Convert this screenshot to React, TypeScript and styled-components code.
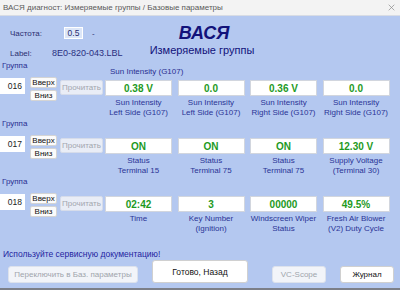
import React from 'react';
import styled, { createGlobalStyle } from 'styled-components';

const GlobalStyle = createGlobalStyle`
  html, body {
    margin: 0;
    padding: 0;
    background: #b4c8f0;
  }
  * {
    box-sizing: border-box;
  }
`;

type Cell = { value: string; label: string[] };
type Group = { id: string; caption?: string; cells: Cell[] };

const groups: Group[] = [
  {
    id: '016',
    caption: 'Sun Intensity (G107)',
    cells: [
      { value: '0.38 V', label: ['Sun Intensity', 'Left Side (G107)'] },
      { value: '0.0', label: ['Sun Intensity', 'Left Side (G107)'] },
      { value: '0.36 V', label: ['Sun Intensity', 'Right Side (G107)'] },
      { value: '0.0', label: ['Sun Intensity', 'Right Side (G107)'] },
    ],
  },
  {
    id: '017',
    cells: [
      { value: 'ON', label: ['Status', 'Terminal 15'] },
      { value: 'ON', label: ['Status', 'Terminal 75'] },
      { value: 'ON', label: ['Status', 'Terminal 75'] },
      { value: '12.30 V', label: ['Supply Voltage', '(Terminal 30)'] },
    ],
  },
  {
    id: '018',
    cells: [
      { value: '02:42', label: ['Time'] },
      { value: '3', label: ['Key Number', '(Ignition)'] },
      { value: '00000', label: ['Windscreen Wiper', 'Status'] },
      { value: '49.5%', label: ['Fresh Air Blower', '(V2) Duty Cycle'] },
    ],
  },
];

const App: React.FC = () => {
  return (
    <>
      <GlobalStyle />
      <Window>
        <TitleBar>
          <TitleText>ВАСЯ диагност: Измеряемые группы / Базовые параметры</TitleText>
          <CloseIcon width="10" height="10" viewBox="0 0 10 10">
            <path d="M1 1 L9 9 M9 1 L1 9" stroke="#8a8a8a" strokeWidth="1" />
          </CloseIcon>
        </TitleBar>

        <Header>
          <Params>
            <ParamRow>
              <ParamName>Частота:</ParamName>
              <FreqBox>0.5</FreqBox>
              <Dash>-</Dash>
            </ParamRow>
            <ParamRow>
              <ParamName $narrow>Label:</ParamName>
              <ParamValue>8E0-820-043.LBL</ParamValue>
            </ParamRow>
          </Params>
          <TitleBlock>
            <BigTitle>ВАСЯ</BigTitle>
            <SubTitle>Измеряемые группы</SubTitle>
          </TitleBlock>
        </Header>

        {groups.map((g) => (
          <GroupBlock key={g.id}>
            <GroupHead>
              <GroupLabel>Группа</GroupLabel>
              {g.caption && <Caption>{g.caption}</Caption>}
            </GroupHead>
            <GroupBody>
              <Controls>
                <GroupInput>{g.id}</GroupInput>
                <UpDown>
                  <SmallButton>Вверх</SmallButton>
                  <SmallButton>Вниз</SmallButton>
                </UpDown>
                <ReadButton>Прочитать</ReadButton>
              </Controls>
              <Cells>
                {g.cells.map((c, i) => (
                  <CellColumn key={i}>
                    <ValueBox>{c.value}</ValueBox>
                    <CellLabel>
                      {c.label.map((l, j) => (
                        <div key={j}>{l}</div>
                      ))}
                    </CellLabel>
                  </CellColumn>
                ))}
              </Cells>
            </GroupBody>
          </GroupBlock>
        ))}

        <Notice>Используйте сервисную документацию!</Notice>

        <Footer>
          <FooterButton $w={130} $disabled>Переключить в Баз. параметры</FooterButton>
          <FooterButton $w={96} $h={23} $big>Готово, Назад</FooterButton>
          <Spacer />
          <FooterButton $w={54} $disabled>VC-Scope</FooterButton>
          <FooterButton $w={54}>Журнал</FooterButton>
        </Footer>
      </Window>
    </>
  );
};

const Window = styled.div`
  width: 400px;
  height: 290px;
  background: #b4c8f0;
  border-bottom: 2px solid #7c7f88;
  font-family: "Liberation Sans", Arial, sans-serif;
  display: flex;
  flex-direction: column;
  overflow: hidden;
`;

const TitleBar = styled.div`
  height: 16px;
  background: #f3f3f3;
  border-bottom: 1px solid #d8dce4;
  display: flex;
  align-items: center;
  justify-content: space-between;
  padding: 0 5px 0 3px;
`;

const TitleText = styled.span`
  font-size: 8px;
  color: #5a5a5a;
  white-space: nowrap;
`;

const CloseIcon = styled.svg`
  display: block;
  width: 7px;
  height: 7px;
`;

const Header = styled.div`
  height: 44px;
  display: flex;
`;

const Params = styled.div`
  width: 140px;
  padding: 11px 0 0 10px;
  display: flex;
  flex-direction: column;
  gap: 8px;
`;

const ParamRow = styled.div`
  height: 12px;
  display: flex;
  align-items: center;
`;

const ParamName = styled.span<{ $narrow?: boolean }>`
  width: ${(p) => (p.$narrow ? 42 : 54)}px;
  font-size: 8px;
  color: #2a2f70;
`;

const FreqBox = styled.span`
  width: 19px;
  height: 12px;
  background: #dce6f8;
  border: 1px solid #ffffff;
  font-size: 8.5px;
  color: #2a2f70;
  display: flex;
  align-items: center;
  justify-content: center;
`;

const Dash = styled.span`
  margin-left: 9px;
  font-size: 8px;
  color: #2a2f70;
`;

const ParamValue = styled.span`
  font-size: 9px;
  color: #2a2f80;
`;

const TitleBlock = styled.div`
  width: 124px;
  display: flex;
  flex-direction: column;
  align-items: center;
  padding-top: 6px;
`;

const BigTitle = styled.div`
  font-size: 18px;
  font-weight: bold;
  font-style: italic;
  color: #12127a;
  line-height: 22px;
  padding-left: 4px;
`;

const SubTitle = styled.div`
  font-size: 11px;
  color: #12127a;
  line-height: 12px;
`;

const GroupBlock = styled.div`
  height: 58px;
  display: flex;
  flex-direction: column;
`;

const GroupHead = styled.div`
  height: 17px;
  display: flex;
  align-items: flex-start;
`;

const GroupLabel = styled.span`
  width: 105px;
  padding-left: 2px;
  font-size: 8px;
  line-height: 12px;
  color: #2a2f90;
`;

const Caption = styled.span`
  margin-top: 6px;
  padding-left: 5px;
  font-size: 8px;
  line-height: 11px;
  color: #2a2f90;
`;

const GroupBody = styled.div`
  display: flex;
`;

const Controls = styled.div`
  width: 105px;
  height: 26px;
  display: flex;
  align-items: flex-start;
`;

const GroupInput = styled.div`
  margin-top: 1px;
  width: 25px;
  height: 16px;
  background: #ffffff;
  font-size: 8.5px;
  color: #222;
  display: flex;
  align-items: center;
  justify-content: flex-end;
  padding-right: 3px;
`;

const UpDown = styled.div`
  margin-left: 5px;
  width: 27px;
  display: flex;
  flex-direction: column;
  gap: 2px;
`;

const SmallButton = styled.div`
  height: 11px;
  background: #fbfbfb;
  border: 1px solid #d4d4d4;
  border-radius: 2px;
  font-size: 8px;
  color: #111;
  display: flex;
  align-items: center;
  justify-content: center;
`;

const ReadButton = styled.div`
  margin-left: 3px;
  margin-top: 3px;
  width: 43px;
  height: 15px;
  background: #e9edf6;
  border: 1px solid #d6dcea;
  border-radius: 2px;
  font-size: 8px;
  color: #a2a6ae;
  display: flex;
  align-items: center;
  justify-content: center;
`;

const Cells = styled.div`
  display: grid;
  grid-template-columns: repeat(4, 67px);
  column-gap: 5.5px;
`;

const CellColumn = styled.div`
  display: flex;
  flex-direction: column;
  align-items: center;
`;

const ValueBox = styled.div`
  margin-top: 3px;
  width: 67px;
  height: 16px;
  background: #ffffff;
  border: 1px solid #d2d6de;
  font-size: 10px;
  font-weight: bold;
  color: #1e9a1e;
  display: flex;
  align-items: center;
  justify-content: center;
`;

const CellLabel = styled.div`
  margin-top: 2px;
  font-size: 8px;
  line-height: 10px;
  color: #2a3496;
  text-align: center;
  white-space: nowrap;
`;

const Notice = styled.div`
  margin-top: 14px;
  padding-left: 3px;
  font-size: 8.5px;
  line-height: 12px;
  color: #2424a0;
`;

const Footer = styled.div`
  height: 23px;
  display: flex;
  align-items: flex-end;
  gap: 14px;
  padding: 0 6px 0 8px;
`;

const Spacer = styled.div`
  flex: 1;
  margin-right: -8px;
`;

const FooterButton = styled.div<{ $w: number; $h?: number; $disabled?: boolean; $big?: boolean }>`
  width: ${(p) => p.$w}px;
  height: ${(p) => p.$h ?? 17}px;
  background: ${(p) => (p.$disabled ? '#f2f4f9' : '#ffffff')};
  border: 1px solid ${(p) => (p.$disabled ? '#dde2ec' : '#d0d0d0')};
  border-radius: 3px;
  font-size: ${(p) => (p.$big ? 8.5 : 8)}px;
  color: ${(p) => (p.$disabled ? '#a0a4ac' : '#111')};
  display: flex;
  align-items: center;
  justify-content: center;
  white-space: nowrap;
`;

export default App;
